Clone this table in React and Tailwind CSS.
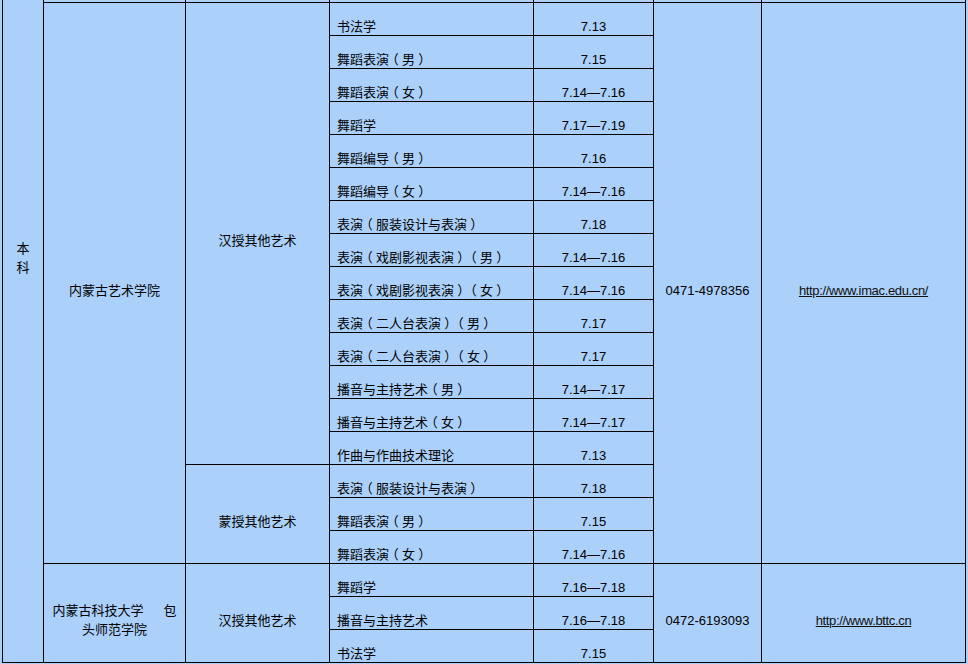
import React from 'react';

const hanshou1 = [
  ['书法学', '7.13'],
  ['舞蹈表演（男）', '7.15'],
  ['舞蹈表演（女）', '7.14—7.16'],
  ['舞蹈学', '7.17—7.19'],
  ['舞蹈编导（男）', '7.16'],
  ['舞蹈编导（女）', '7.14—7.16'],
  ['表演（服装设计与表演）', '7.18'],
  ['表演（戏剧影视表演）（男）', '7.14—7.16'],
  ['表演（戏剧影视表演）（女）', '7.14—7.16'],
  ['表演（二人台表演）（男）', '7.17'],
  ['表演（二人台表演）（女）', '7.17'],
  ['播音与主持艺术（男）', '7.14—7.17'],
  ['播音与主持艺术（女）', '7.14—7.17'],
  ['作曲与作曲技术理论', '7.13'],
];

const mengshou = [
  ['表演（服装设计与表演）', '7.18'],
  ['舞蹈表演（男）', '7.15'],
  ['舞蹈表演（女）', '7.14—7.16'],
];

const hanshou2 = [
  ['舞蹈学', '7.16—7.18'],
  ['播音与主持艺术', '7.16—7.18'],
  ['书法学', '7.15'],
];

// full-width brackets sit centred in their box in the original font:
// use the half-width glyph and pad it back out to one em
const withParens = (text) =>
  text.split(/([（）])/).map((part, i) =>
    part === '（' || part === '）' ? (
      <span key={i} className="[font-feature-settings:'halt'] px-[3.25px]">
        {part}
      </span>
    ) : (
      part
    )
  );

const Cell = ({ className = '', children }) => (
  <div className={`bg-[#abd0fa] flex items-center pt-[14px] leading-[19px] ${className}`}>
    {children}
  </div>
);

const MajorRows = ({ rows }) =>
  rows.flatMap(([major, date]) => [
    <Cell key={major + date + 'm'} className="pl-[7px]">{withParens(major)}</Cell>,
    <Cell key={major + date + 'd'} className="justify-center">{date}</Cell>,
  ]);

const Link = ({ children }) => (
  <span className="underline underline-offset-[1px] tracking-[-0.35px] text-[#111]">{children}</span>
);

export default function App() {
  return (
    <div className="h-[664px] w-[968px] overflow-hidden bg-[#abd0fa] text-[13px] text-black font-['Liberation_Sans','Noto_Sans_CJK_SC',sans-serif] [text-spacing-trim:space-all]">
      <div className="ml-[2px] mt-[-31px] grid w-max grid-cols-[40px_141px_143px_203px_119px_107px_203px] auto-rows-[32px] gap-px bg-black p-px">
        {/* level column, starts above the visible area */}
        <div className="row-span-21 bg-[#abd0fa] flex flex-col items-center pt-[269px] leading-[19px]">
          <span>本</span>
          <span>科</span>
        </div>

        {/* tail of the previous row */}
        <div className="bg-[#abd0fa]" />
        <div className="bg-[#abd0fa]" />
        <div className="bg-[#abd0fa]" />
        <div className="bg-[#abd0fa]" />
        <div className="bg-[#abd0fa]" />
        <div className="bg-[#abd0fa]" />

        {/* 内蒙古艺术学院 */}
        <Cell className="row-span-17 justify-center">内蒙古艺术学院</Cell>
        <Cell className="row-span-14 justify-center">汉授其他艺术</Cell>
        <Cell className="pl-[7px]">{hanshou1[0][0]}</Cell>
        <Cell className="justify-center">{hanshou1[0][1]}</Cell>
        <Cell className="row-span-17 justify-center">0471-4978356</Cell>
        <Cell className="row-span-17 justify-center">
          <Link>http://www.imac.edu.cn/</Link>
        </Cell>
        <MajorRows rows={hanshou1.slice(1)} />
        <Cell className="row-span-3 justify-center">蒙授其他艺术</Cell>
        <MajorRows rows={mengshou} />

        {/* 内蒙古科技大学包头师范学院 */}
        <Cell className="row-span-3 justify-center text-center">
          <span>
            内蒙古科技大学<span className="inline-block w-[20px]" />包
            <br />
            头师范学院
          </span>
        </Cell>
        <Cell className="row-span-3 justify-center">汉授其他艺术</Cell>
        <Cell className="pl-[7px]">{hanshou2[0][0]}</Cell>
        <Cell className="justify-center">{hanshou2[0][1]}</Cell>
        <Cell className="row-span-3 justify-center">0472-6193093</Cell>
        <Cell className="row-span-3 justify-center">
          <Link>http://www.bttc.cn</Link>
        </Cell>
        <MajorRows rows={hanshou2.slice(1)} />
      </div>
    </div>
  );
}
